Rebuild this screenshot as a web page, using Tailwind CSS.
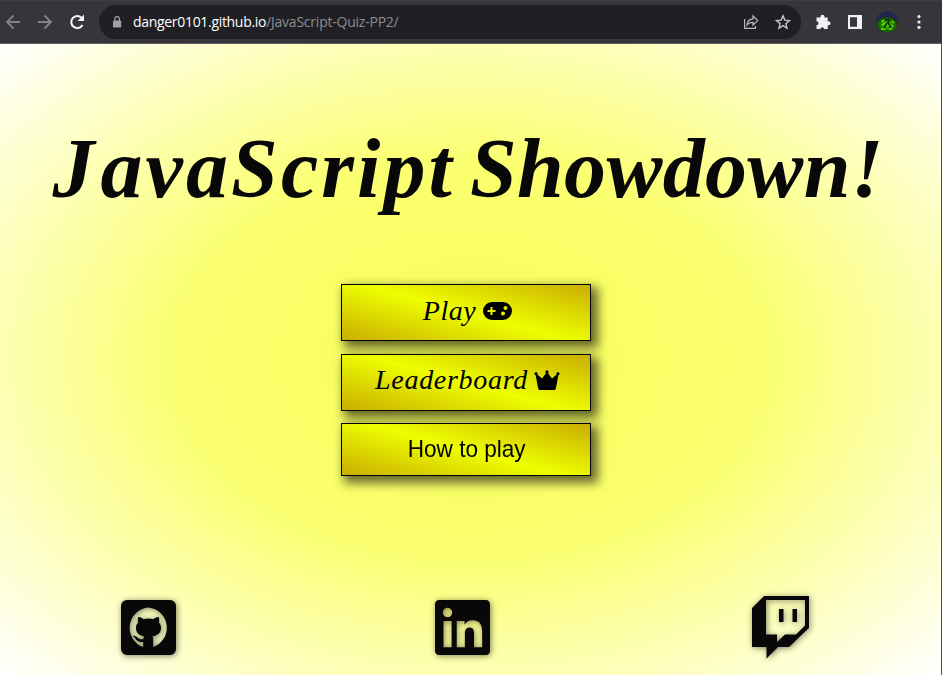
<!DOCTYPE html>
<html lang="en">
<head>
<meta charset="utf-8">
<title>JavaScript Showdown!</title>
<script src="https://cdn.jsdelivr.net/npm/@tailwindcss/browser@4"></script>
</head>
<body class="w-[942px] h-[675px] overflow-hidden flex flex-col font-['Liberation_Sans',Arial,sans-serif]">
<header class="h-[44px] shrink-0 bg-[#36353a] border-t border-t-[#3f3e44] border-b border-b-[#5c5b60] flex items-center">
  <svg class="w-4 h-4 ml-[5px]" viewBox="0 0 16 16" fill="none" stroke="#848387" stroke-width="1.8"><path d="M15 8H2M8.500 1.500L2 8l6.500 6.500"/></svg>
  <svg class="w-4 h-4 ml-4" viewBox="0 0 16 16" fill="none" stroke="#848387" stroke-width="1.8"><path d="M1 8h13M7.500 1.500L14 8l-6.500 6.500"/></svg>
  <svg class="w-4 h-4 ml-4" viewBox="0 0 16 16"><path d="M13.500 11A6 6 0 1 1 12.600 3.900" fill="none" stroke="#f3f3f4" stroke-width="2.100"/><path d="M15 .6v6.500H8.500z" fill="#f3f3f4"/></svg>
  <div class="ml-[14px] w-[702px] h-[34px] rounded-full bg-[#202024] flex items-center">
    <svg class="w-[10px] h-3 ml-[13px]" viewBox="0 0 10 12"><rect x="1" y="4.500" width="8.200" height="7" rx="1" fill="#a09fa9"/><path d="M2.800 5V3a2.300 2.300 0 0 1 4.600 0v2" fill="none" stroke="#a09fa9" stroke-width="1.200"/></svg>
    <span class="ml-[11px] flex-1 text-[14px] leading-none whitespace-nowrap font-['Open_Sans','Noto_Sans',sans-serif] tracking-[-0.23px] text-[#8d8d91]"><span class="text-white tracking-[-0.31px]">danger0101.github.io</span>/JavaScript-Quiz-PP2/</span>
    <svg class="w-4 h-4 mr-4" viewBox="0 0 16 16" fill="none" stroke="#b8b8bb" stroke-width="1.200"><path d="M1.600 5v9.400h10.800V12M4 11c.4-4 2.500-6 6-6.200V2l4.700 4.600L10 11V8.300C7.300 8.200 5.400 9 4 11z"/></svg>
    <svg class="w-4 h-4 mr-[10px]" viewBox="0 0 16 16" fill="none" stroke="#c4c4c7" stroke-width="1.400"><path d="M8 1.800l1.800 4.300 4.700.4-3.600 3.100 1.100 4.600L8 11.700l-4 2.500 1.100-4.600-3.600-3.100 4.700-.4z"/></svg>
  </div>
  <svg class="w-4 h-4 ml-[14px]" viewBox="0 0 16 16" fill="#f1f1f4"><path d="M1.500 3.500h4V2.700a2 2 0 0 1 4 0v.8h3.200v3.700h.8a2 2 0 0 1 0 4h-.8v3.700H9.200a2 2 0 0 0-3.900 0H1.500v-3.600a2 2 0 0 0 0-4z"/></svg>
  <svg class="w-[14px] h-[14px] ml-[17px]" viewBox="0 0 14 14"><path fill="#f1f1f4" fill-rule="evenodd" d="M0 0h14v14H0zM2 2.300v9.500h7V2.300z"/></svg>
  <svg class="w-[22px] h-[22px] ml-[14px]" viewBox="0 0 22 22"><defs><radialGradient id="av"><stop offset="0" stop-color="#50d800"/><stop offset=".5" stop-color="#288d00"/><stop offset="1" stop-color="#164207"/></radialGradient></defs><circle cx="11" cy="11" r="10.800" fill="#20274b"/><path d="M.5 12Q4 6 11 6t10.500 6q-1 9.500-10.500 9.800Q1.500 21 .5 12z" fill="url(#av)"/><path d="M9 9.500q3-2 5 0M12 10l1 4M11 12l-3 5M14 14v3" fill="none" stroke="#0b2604" stroke-width="1.500"/><path d="M5.500 10.500l2.500-1M16 10l2 2M6 14l3-2M5 18h4M13 18h3M16 14l1 2" stroke="#58ef00" stroke-width="1.400"/></svg>
  <svg class="w-1 h-4 ml-[19px]" viewBox="0 0 4 16" fill="#f1f1f4"><circle cx="2" cy="2.600" r="1.600"/><circle cx="2" cy="8" r="1.600"/><circle cx="2" cy="13.300" r="1.600"/></svg>
</header>
<main class="flex-1 min-h-0 border-r border-r-[#4a4d70] flex flex-col items-center bg-[radial-gradient(ellipse,#f7ff57_0%,#fbff70_44%,#ffffff_100%)]">
  <h1 class="mt-[65px] h-[120px] w-[836px] flex gap-[15px] whitespace-nowrap font-['Liberation_Serif',serif] font-bold italic text-[84px] leading-[120px] text-[#080808]"><span class="tracking-[3.100px]"><span class="tracking-[6px]">J</span>avaScript</span><span class="tracking-[0.300px]">Showdown!</span></h1>
  <div class="mt-[55px] -ml-[9px] w-[250px] flex flex-col text-black">
    <button class="h-[57px] border border-black bg-[linear-gradient(15deg,#c9ad00,#eeff00,#c9ad00)] shadow-[5px_5px_10px_2px_rgba(0,0,0,0.6)] flex items-center justify-center gap-[7px] pb-[3px] pl-[3px] font-['Liberation_Serif',serif] italic text-[28px] tracking-[0.500px]"><span>Play</span>
      <svg class="w-[29px] h-[18px]" viewBox="0 0 29 18"><path fill-rule="evenodd" d="M9 0h11a9 9 0 0 1 0 18H9A9 9 0 0 1 9 0zM7.500 5v3h-3v2h3v3h2v-3h3V8h-3V5zM20 9.500a2 2 0 1 0 0 4 2 2 0 0 0 0-4zM22.500 4a2 2 0 1 0 0 4 2 2 0 0 0 0-4z"/></svg></button>
    <button class="mt-[13px] h-[57px] border border-black bg-[linear-gradient(15deg,#c9ad00,#eeff00,#c9ad00)] shadow-[5px_5px_10px_2px_rgba(0,0,0,0.6)] flex items-center justify-center gap-[6px] pb-[5px] pl-[3px] font-['Liberation_Serif',serif] italic text-[28px] tracking-[0.700px]"><span>Leaderboard</span>
      <svg class="w-[26px] h-[20px]" viewBox="0 0 26 20"><path d="M5 20l-1-2L1.700 5.200A1.500 1.500 0 1 1 3.300 4.500L8 8.500 12 3.200a1.600 1.600 0 1 1 2 0l4 5.300 4.700-4a1.500 1.500 0 1 1 1.600.7L22 18l-1 2z"/></svg></button>
    <button class="mt-[12px] h-[53px] border border-black bg-[linear-gradient(15deg,#c9ad00,#eeff00,#c9ad00)] shadow-[5px_5px_10px_2px_rgba(0,0,0,0.6)] text-[24px] pb-[2px] pl-[1px]"><span class="inline-block scale-x-[0.94]">How to play</span></button>
  </div>
  <footer class="mt-[119px] w-full h-[64px] pl-[121px] flex text-[#080808]">
    <svg class="w-[55px] h-[55px] mt-[5px] drop-shadow-[1px_1px_3px_rgba(0,0,0,0.5)]" viewBox="0 0 448 448" fill="currentColor"><path fill-rule="evenodd" d="M48 0h352a48 48 0 0 1 48 48v352a48 48 0 0 1-48 48H48a48 48 0 0 1-48-48V48A48 48 0 0 1 48 0zM224 61a166 166 0 0 0-43 322v-41c-34 6-54-9-63-26-6-12-14-14-23-23 29-8 44 25 67 27 8 1 15 0 20-3 1-9 5-17 10-21-47-5-70-29-70-69 0-17 5-31 17-43-4-14-3-31 2-45 17-1 31 8 43 17 26-7 54-7 80 0 12-9 26-18 43-17 5 14 6 31 2 45 12 12 17 26 17 43 0 40-23 64-70 69 5 7 6 17 6 30v57A166 166 0 0 0 224 61z"/></svg>
    <svg class="w-[55px] h-[55px] mt-[5px] ml-[259px] drop-shadow-[1px_1px_3px_rgba(0,0,0,0.5)]" viewBox="0 0 448 448" fill="currentColor"><path d="M416 0H31.900C14.300 0 0 14.500 0 32.300v383.400C0 433.500 14.300 448 31.900 448H416c17.600 0 32-14.500 32-32.300V32.300C448 14.500 433.600 0 416 0zM135.400 384H69V170.200h66.500V384zM102.200 141a38.500 38.500 0 1 1 0-77 38.500 38.500 0 0 1 0 77zM384.300 384h-66.400V280c0-24.800-.5-56.700-34.500-56.700-34.600 0-39.900 27-39.900 54.900V384h-66.400V170.200h63.700v29.200h.9c8.900-16.800 30.600-34.500 62.900-34.500 67.200 0 79.700 44.300 79.700 101.900z"/></svg>
    <svg class="w-[58px] h-[63px] mt-[1px] ml-[262px] drop-shadow-[1px_1px_3px_rgba(0,0,0,0.5)]" viewBox="0 0 58 63" fill="currentColor"><path fill-rule="evenodd" d="M12 0h45v32L37 51H26L14.500 62.500V51H0V12zM14 4v34.500h11v7.500l8-7.500h11l9-9V4z"/><path d="M27 13h4.500v13H27zM40.500 13H45v13h-4.500z"/></svg>
  </footer>
</main>
</body>
</html>
